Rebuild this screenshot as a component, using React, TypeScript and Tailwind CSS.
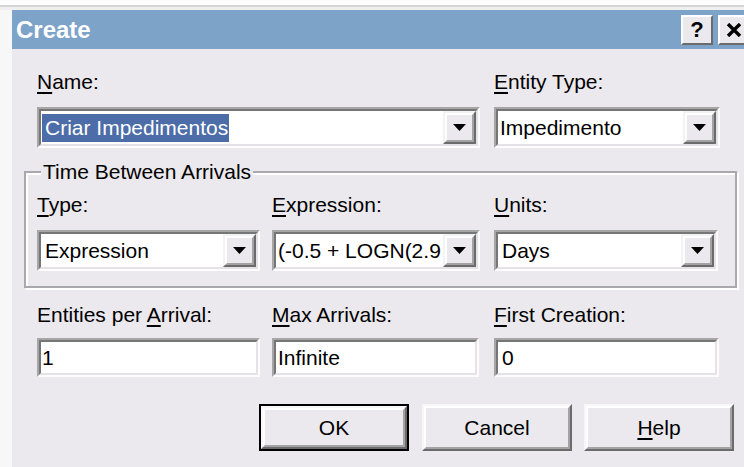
import React from 'react';

const FONT = "font-['Liberation_Sans',Arial,sans-serif]";

// mnemonic letter with the classic underline
function Mn({ children }: { children: React.ReactNode }) {
  return <span className="underline decoration-[2px] underline-offset-[3px]">{children}</span>;
}

function Label({ children, className = '' }: { children: React.ReactNode; className?: string }) {
  return <div className={`h-[24px] leading-[24px] text-[21px] text-black whitespace-nowrap ${className}`}>{children}</div>;
}

// sunken 3D frame used by edits and combos
function Sunken({ className = '', children }: { className?: string; children: React.ReactNode }) {
  return (
    <div className={`shrink-0 border-2 border-t-[#a6a6a6] border-l-[#a6a6a6] border-b-[#fdfdfd] border-r-[#fdfdfd] ${className}`}>
      <div className="flex h-full items-center border-2 border-t-[#767676] border-l-[#767676] border-b-[#e4e2e6] border-r-[#e4e2e6] bg-white">
        {children}
      </div>
    </div>
  );
}

function DropButton() {
  return (
    <div className="h-full w-[33px] shrink-0 border-2 border-t-[#f3f2f4] border-l-[#f3f2f4] border-b-[#6b6b6b] border-r-[#6b6b6b]">
      <div className="flex h-full items-center justify-center border-2 border-t-white border-l-white border-b-[#a3a3a3] border-r-[#a3a3a3] bg-[#ebe9ed]">
        <svg width="13" height="7" viewBox="0 0 13 7">
          <path d="M0 0h13L6.5 7z" fill="#000" />
        </svg>
      </div>
    </div>
  );
}

function Combo({ value, width, pad = 'pl-[4px]', selected = false }: { value: string; width: string; pad?: string; selected?: boolean }) {
  return (
    <Sunken className={`${width} h-[41px]`}>
      <div className={`flex-1 min-w-0 overflow-hidden whitespace-nowrap text-[21px] leading-[24px] ${pad}`}>
        {selected ? (
          <span className="inline-block bg-[#4c6da8] text-white leading-[28px] pl-[3px] pr-[1px]">{value}</span>
        ) : (
          <span className="text-black">{value}</span>
        )}
      </div>
      <DropButton />
    </Sunken>
  );
}

function Edit({ value, width, pad = 'pl-[3px]' }: { value: string; width: string; pad?: string }) {
  return (
    <Sunken className={`${width} h-[39px]`}>
      <div className={`flex-1 whitespace-nowrap text-[21px] leading-[24px] text-black ${pad}`}>{value}</div>
    </Sunken>
  );
}

function PushButton({ children, isDefault = false, className = '' }: { children: React.ReactNode; isDefault?: boolean; className?: string }) {
  const inner = (
    <div className="h-full border-2 border-t-[#f7f6f8] border-l-[#f7f6f8] border-b-[#6b6b6b] border-r-[#6b6b6b]">
      <div className="flex h-full items-center justify-center border-2 border-t-white border-l-white border-b-[#a3a3a3] border-r-[#a3a3a3] bg-[#ebe9ed] text-[21px] text-black">
        {children}
      </div>
    </div>
  );
  return (
    <div className={`w-[150px] h-[47px] shrink-0 ${isDefault ? 'border-2 border-black' : ''} ${className}`}>{inner}</div>
  );
}

function CaptionButton({ children }: { children: React.ReactNode }) {
  return (
    <div className="w-[32px] h-[30px] shrink-0 border-2 border-t-white border-l-white border-b-[#6b6b6b] border-r-[#6b6b6b] bg-[#ebe9ed] flex items-center justify-center">
      {children}
    </div>
  );
}

export default function App() {
  return (
    <div className={`w-[744px] h-[467px] overflow-hidden bg-[#f7f7f7] flex flex-col ${FONT}`}>
      {/* window frame edge above the caption */}
      <div className="h-[5px] bg-[#fdfdfd]" />
      <div className="h-[2px] bg-[#d5d5d5]" />
      <div className="h-[3px] bg-[#efefef]" />

      <div className="flex flex-1 min-h-0">
        <div className="w-[12px] shrink-0 bg-[#f7f7f7]" />

        <div className="flex-1 flex flex-col bg-[#ebe9ed]">
          {/* Caption bar */}
          <div className="h-[39px] bg-[#7ea3c9] flex items-center pl-[4px]">
            <span className="text-white font-bold text-[24px] leading-none mt-[1px]">Create</span>
            <div className="ml-auto flex gap-[5px] mr-[-6px]">
              <CaptionButton>
                <span className="text-[22px] font-bold leading-none text-black">?</span>
              </CaptionButton>
              <CaptionButton>
                <svg width="16" height="14" viewBox="0 0 16 14">
                  <path d="M2 1l12 12M14 1L2 13" stroke="#000" strokeWidth="3.4" />
                </svg>
              </CaptionButton>
            </div>
          </div>

          {/* Body */}
          <div className="pl-[12px] pt-[21px]">
            <div className="pl-[13px]">
              <div className="flex gap-[14px]">
                <Label className="w-[443px]"><Mn>N</Mn>ame:</Label>
                <Label><Mn>E</Mn>ntity Type:</Label>
              </div>
              <div className="flex gap-[14px] mt-[13px]">
                <Combo value="Criar Impedimentos" width="w-[443px]" pad="pl-[1px]" selected />
                <Combo value="Impedimento" width="w-[226px]" pad="pl-[2px]" />
              </div>
            </div>

            <fieldset className="mt-[12px] w-[713px] border-2 border-[#a9a9ad] shadow-[inset_2px_2px_0_#fff,2px_2px_0_#fff] pl-[11px] pb-[15px]">
              <legend className="ml-[4px] px-[2px] bg-[#ebe9ed] text-[21px] leading-[24px] text-black">Time Between Arrivals</legend>
              <div className="mt-[9px] flex">
                <Label className="w-[235px]"><Mn>T</Mn>ype:</Label>
                <Label className="w-[222px]"><Mn>E</Mn>xpression:</Label>
                <Label><Mn>U</Mn>nits:</Label>
              </div>
              <div className="mt-[13px] flex">
                <Combo value="Expression" width="w-[223px]" />
                <Combo value="(-0.5 + LOGN(2.9" width="w-[208px] ml-[12px]" pad="pl-[2px]" />
                <Combo value="Days" width="w-[224px] ml-[14px]" />
              </div>
            </fieldset>

            <div className="pl-[13px] mt-[15px]">
              <div className="flex">
                <Label className="w-[235px]">Entities per <Mn>A</Mn>rrival:</Label>
                <Label className="w-[222px]"><Mn>M</Mn>ax Arrivals:</Label>
                <Label><Mn>F</Mn>irst Creation:</Label>
              </div>
              <div className="mt-[11px] flex">
                <Edit value="1" width="w-[223px]" pad="pl-[1px]" />
                <Edit value="Infinite" width="w-[207px] ml-[12px]" pad="pl-[2px]" />
                <Edit value="0" width="w-[225px] ml-[15px]" pad="pl-[4px]" />
              </div>
            </div>

            <div className="mt-[27px] flex pl-[235px]">
              <PushButton isDefault>OK</PushButton>
              <PushButton className="ml-[13px]">Cancel</PushButton>
              <PushButton className="ml-[12px]"><Mn>H</Mn>elp</PushButton>
            </div>
          </div>
        </div>
      </div>
    </div>
  );
}
